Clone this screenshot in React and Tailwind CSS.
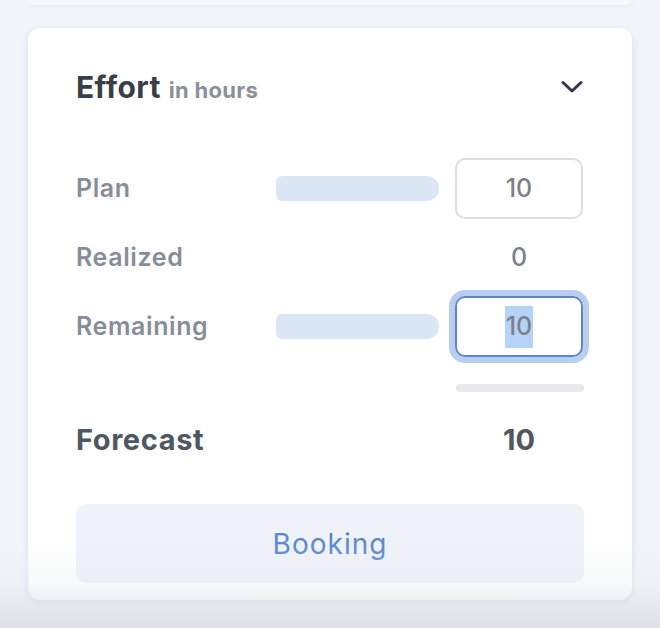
import React from "react";

const font = { fontFamily: "Inter, Lato, 'Noto Sans', sans-serif" };

function Row({ label, children }) {
  return (
    <div className="flex h-[61px] items-center">
      <div className="w-[200px] text-[25px] font-semibold tracking-[0.6px] text-[#878e9a]">{label}</div>
      {children}
    </div>
  );
}

export default function App() {
  return (
    <div className="relative h-[628px] w-full overflow-hidden bg-[#f2f4f9]" style={font}>
      <div className="mx-[28px] h-[5px] rounded-b-[12px] bg-[#f6f7fa] shadow-[0_1px_4px_rgba(30,40,70,0.05)]" />
      <div className="mx-[28px] mt-[23px] flex h-[572px] flex-col rounded-[12px] bg-white px-[48px] shadow-[0_2px_6px_rgba(30,40,70,0.12)]">
        <div className="flex h-[118px] items-center justify-between">
          <div className="flex items-baseline gap-[8px]">
            <span className="text-[30px] font-bold tracking-[0.4px] text-[#3a3f47]">Effort</span>
            <span className="text-[22px] font-bold tracking-[0.3px] text-[#8a909c]">in hours</span>
          </div>
          <svg width="22" height="14" viewBox="0 0 22 14" className="mr-[1px]">
            <path d="M2 2.5 L11 11 L20 2.5" fill="none" stroke="#2f3848" strokeWidth="3" strokeLinecap="round" strokeLinejoin="round" />
          </svg>
        </div>
        <div className="mt-[12px] flex flex-col gap-[8px]">
          <Row label="Plan">
            <div className="h-[25px] w-[163px] rounded-l-[6px] rounded-r-[12px] bg-[#dce7f5]" />
            <div className="ml-[16px] flex h-[61px] w-[128px] items-center justify-center rounded-[10px] border-2 border-[#dcdde1] text-[25px] font-medium text-[#7b818b]">
              10
            </div>
          </Row>
          <Row label="Realized">
            <div className="w-[163px]" />
            <div className="ml-[16px] flex w-[128px] justify-center text-[25px] font-medium text-[#7b818b]">0</div>
          </Row>
          <Row label="Remaining">
            <div className="h-[25px] w-[163px] rounded-l-[6px] rounded-r-[12px] bg-[#dce7f5]" />
            <div className="ml-[16px] flex h-[61px] w-[128px] items-center justify-center rounded-[10px] border-2 border-[#5b86cc] text-[25px] font-medium text-[#7b818b] shadow-[0_0_0_6px_#b9cdef]">
              <span className="flex h-[42px] items-center bg-[#b5d3f9] px-[1px]">10</span>
            </div>
          </Row>
        </div>
        <div className="ml-auto mt-[27px] h-[8px] w-[128px] rounded-full bg-[#e8e9ee]" />
        <div className="mt-[28px] flex h-[40px] items-center">
          <div className="w-[379px] text-[29px] font-bold tracking-[0.6px] text-[#4f5763]">Forecast</div>
          <div className="flex w-[128px] justify-center text-[29px] font-bold text-[#4f5763]">10</div>
        </div>
        <button className="mt-[44px] flex h-[79px] w-full items-center justify-center rounded-[10px] bg-[#eff2f9] text-[28px] tracking-[1px] text-[#5b87d0]">
          Booking
        </button>
      </div>
      <div className="pointer-events-none absolute inset-x-0 bottom-0 h-[90px] bg-gradient-to-b from-[rgba(229,231,236,0)] via-[rgba(229,231,236,0.25)] to-[rgba(220,222,228,0.9)]" />
    </div>
  );
}
